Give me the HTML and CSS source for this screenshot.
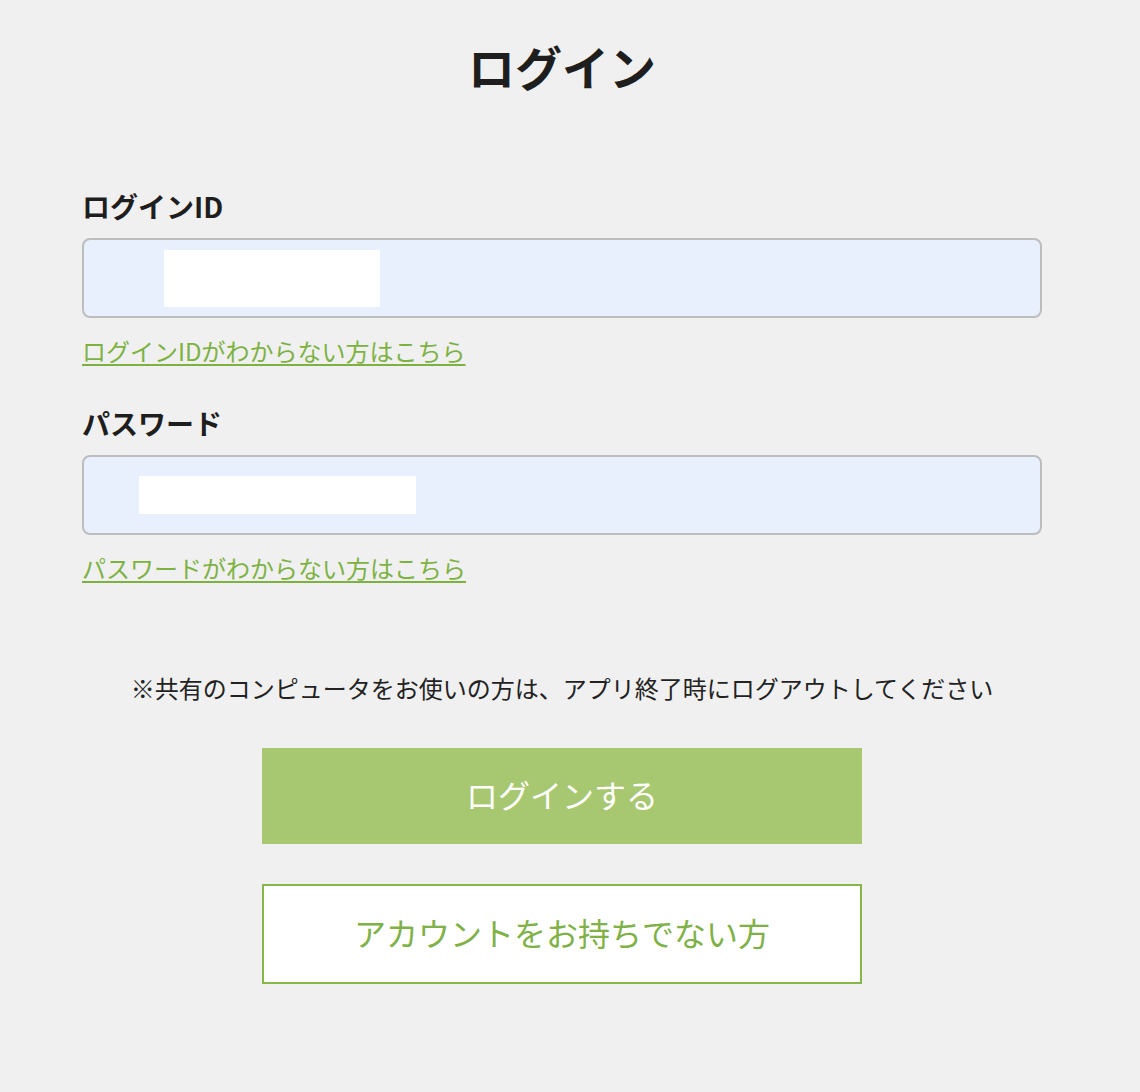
FILE: index.html
```html
<!DOCTYPE html>
<html lang="ja">
<head>
<meta charset="utf-8">
<title>ログイン</title>
<link rel="stylesheet" href="styles.css">
</head>
<body>
<main class="page">
  <h1 class="title">ログイン</h1>
  <form class="form">
    <label class="label label-id">ログインID</label>
    <div class="field field-id"><span class="mask mask-id"></span></div>
    <a class="link" href="#">ログインIDがわからない方はこちら</a>

    <label class="label label-pw">パスワード</label>
    <div class="field field-pw"><span class="mask mask-pw"></span></div>
    <a class="link" href="#">パスワードがわからない方はこちら</a>

    <p class="notice">※共有のコンピュータをお使いの方は、アプリ終了時にログアウトしてください</p>

    <button type="button" class="btn btn-primary">ログインする</button>
    <button type="button" class="btn btn-secondary">アカウントをお持ちでない方</button>
  </form>
</main>
</body>
</html>
```

FILE: styles.css
```css
html, body {
  margin: 0;
  padding: 0;
  background: #f0f0f0;
}
body {
  font-family: "Noto Sans CJK JP", "Noto Sans", sans-serif;
  color: #222;
}
.page {
  width: 960px;
  margin-left: 82px;
  padding-top: 42px;
  padding-bottom: 60px;
}
.title {
  margin: 0;
  font-size: 47px;
  line-height: 48px;
  font-weight: 700;
  text-align: center;
  color: #1e1e1e;
}
.form {
  display: flex;
  flex-direction: column;
  align-items: flex-start;
}
.label {
  display: block;
  font-size: 28px;
  line-height: 28px;
  font-weight: 700;
  color: #1e1e1e;
}
.label-id { margin-top: 102px; }
.label-pw { margin-top: 46px; }
.field {
  box-sizing: border-box;
  width: 960px;
  height: 80px;
  background: #e8f0fe;
  border: 2px solid #bdbdbd;
  border-radius: 8px;
  display: flex;
  align-items: flex-start;
}
.field-id { margin-top: 18px; }
.field-pw { margin-top: 18px; }
.mask {
  display: block;
  background: #ffffff;
}
.mask-id {
  width: 216px;
  height: 57px;
  margin-left: 80px;
  margin-top: 10px;
}
.mask-pw {
  width: 277px;
  height: 38px;
  margin-left: 55px;
  margin-top: 19px;
}
.link {
  margin-top: 21px;
  font-size: 24px;
  line-height: 24px;
  color: #7db243;
  text-decoration: underline;
  text-decoration-thickness: 2px;
  text-underline-offset: 3px;
}
.notice {
  align-self: stretch;
  margin: 96px 0 0;
  font-size: 24px;
  line-height: 24px;
  text-align: center;
  color: #222;
}
.btn {
  align-self: center;
  box-sizing: border-box;
  width: 600px;
  font-family: "Noto Sans CJK JP", "Noto Sans", sans-serif;
  font-size: 32px;
  font-weight: 400;
  border-radius: 0;
  cursor: pointer;
  padding: 0 0 5px;
}
.btn-primary {
  margin-top: 48px;
  height: 96px;
  background: #a7c870;
  border: none;
  color: #ffffff;
}
.btn-secondary {
  margin-top: 40px;
  height: 100px;
  background: #ffffff;
  border: 2px solid #87b64a;
  color: #80b147;
}
```
